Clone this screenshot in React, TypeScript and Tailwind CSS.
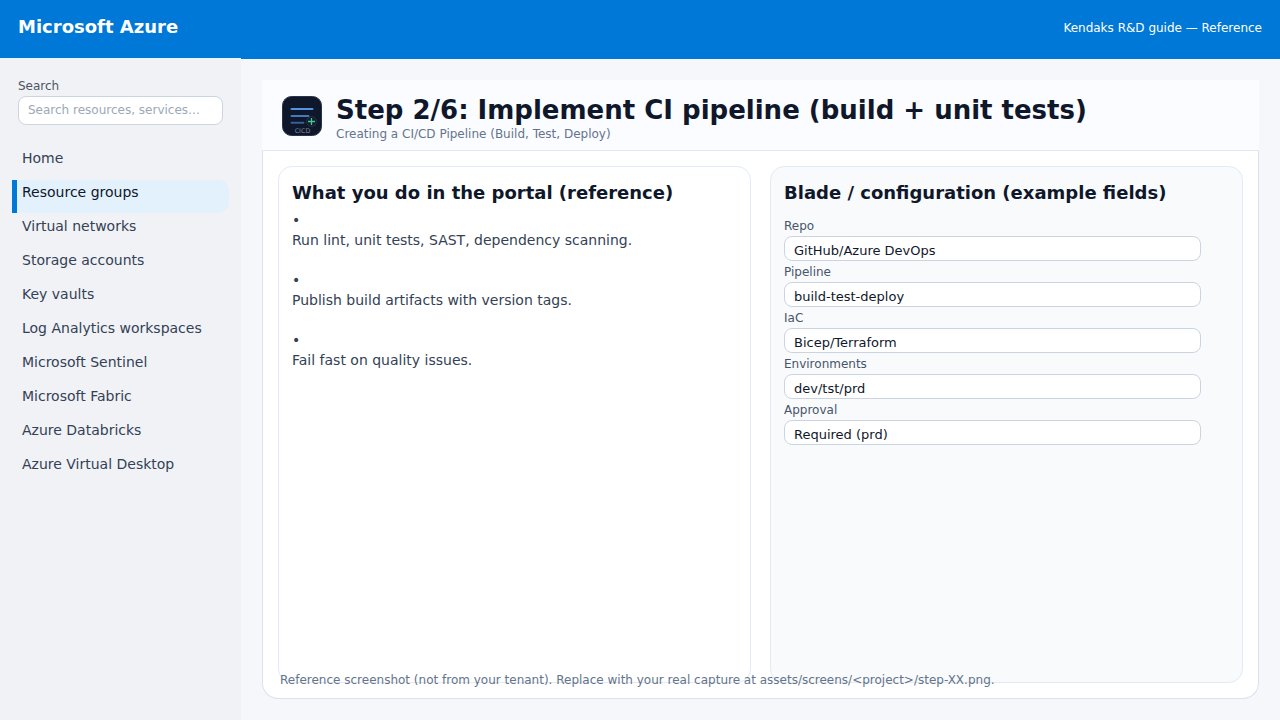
const navItems = [
  'Home',
  'Resource groups',
  'Virtual networks',
  'Storage accounts',
  'Key vaults',
  'Log Analytics workspaces',
  'Microsoft Sentinel',
  'Microsoft Fabric',
  'Azure Databricks',
  'Azure Virtual Desktop',
];

const activeItem = 'Resource groups';

const steps = [
  'Run lint, unit tests, SAST, dependency scanning.',
  'Publish build artifacts with version tags.',
  'Fail fast on quality issues.',
];

const fields = [
  { id: 'repo', label: 'Repo', value: 'GitHub/Azure DevOps' },
  { id: 'pipeline', label: 'Pipeline', value: 'build-test-deploy' },
  { id: 'iac', label: 'IaC', value: 'Bicep/Terraform' },
  { id: 'environments', label: 'Environments', value: 'dev/tst/prd' },
  { id: 'approval', label: 'Approval', value: 'Required (prd)' },
];

function PipelineIcon() {
  return (
    <svg className="size-10 shrink-0" viewBox="0 0 40 40" aria-hidden="true">
      <rect x="0.5" y="0.5" width="39" height="39" rx="9" fill="#0f172a" stroke="#273449" />
      <path d="M9.5 13H30.5" stroke="#5294e2" strokeWidth="2" strokeLinecap="round" />
      <path d="M9.5 20H26.5" stroke="#4379bd" strokeWidth="2" strokeLinecap="round" />
      <path d="M9.5 26.8H21.5" stroke="#375f98" strokeWidth="2" strokeLinecap="round" />
      <circle cx="29.5" cy="25.5" r="5" fill="#111b2c" stroke="#26334a" />
      <path d="M26 25.5H33M29.5 22V29" stroke="#41c995" strokeWidth="1.3" />
      <text x="20.5" y="36.8" textAnchor="middle" fontSize="6.4" fill="#7c8798" fontFamily="DejaVu Sans, sans-serif">
        CICD
      </text>
    </svg>
  );
}

function Sidebar() {
  return (
    <aside className="w-[241px] shrink-0 bg-[#f1f2f6] px-3 pt-5">
      <div className="px-1.5">
        <label htmlFor="search" className="block text-xs leading-4 text-[#4b5563]">
          Search
        </label>
        <input
          id="search"
          type="search"
          placeholder="Search resources, services…"
          className="mt-0.5 block h-[29px] w-full rounded-lg border border-[#cbd5e1] bg-white px-[9px] pb-0.5 text-xs text-[#0f172a] placeholder:text-[#9ca8b8]"
        />
      </div>
      <nav className="mt-[21px] flex flex-col gap-px">
        {navItems.map((item) => (
          <a
            key={item}
            href="#"
            aria-current={item === activeItem ? 'page' : undefined}
            className={
              item === activeItem
                ? 'block h-[33px] rounded-r-[10px] border-l-5 border-[#0078d7] bg-[#e3f1fc] pl-[5px] pt-0.5 text-sm text-[#0f172a]'
                : 'block h-[33px] border-l-5 border-transparent pl-[5px] pt-0.5 text-sm text-[#334155]'
            }
          >
            {item}
          </a>
        ))}
      </nav>
    </aside>
  );
}

export default function App() {
  return (
    <div className="flex min-h-screen flex-col bg-[#f5f7fb] font-['DejaVu_Sans',sans-serif]">
      <header className="flex h-[58px] items-center justify-between bg-[#0078d7] px-[18px] text-white">
        <div className="pb-1 text-lg font-bold">Microsoft Azure</div>
        <div className="pb-0.5 text-xs">Kendaks R&amp;D guide — Reference</div>
      </header>
      <div className="flex grow">
        <Sidebar />
        <main className="flex min-w-0 grow flex-col border-t border-[#0078d7] p-[21px]">
          <div className="relative flex grow flex-col">
            <div className="flex h-[71px] items-start gap-3.5 border-b border-[#dfe9f5] bg-[#fbfcff] px-5 pt-4">
              <PipelineIcon />
              <div className="-mt-0.5">
                <h1 className="text-[26px] leading-8 font-bold text-[#0f172a]">
                  Step 2/6: Implement CI pipeline (build + unit tests)
                </h1>
                <p className="text-xs leading-4 text-[#64748b]">Creating a CI/CD Pipeline (Build, Test, Deploy)</p>
              </div>
            </div>
            <div className="grid grow grid-cols-2 gap-[19px] rounded-b-2xl border border-t-0 border-[#d7e3ef] bg-white p-[15px]">
              <section className="rounded-[14px] border border-[#e2ebf5] px-[13px] pt-3">
                <h2 className="text-lg leading-7 font-bold text-[#0f172a]">What you do in the portal (reference)</h2>
                <ul className="mt-[3px] flex flex-col gap-5 text-sm leading-5 text-[#334155]">
                  {steps.map((step) => (
                    <li key={step}>
                      <span className="block">•</span>
                      {step}
                    </li>
                  ))}
                </ul>
              </section>
              <section className="rounded-[14px] border border-[#e2ebf5] bg-[#f9fafc] pt-3 pr-[41px] pl-[13px]">
                <h2 className="text-lg leading-7 font-bold whitespace-nowrap text-[#0f172a]">
                  Blade / configuration (example fields)
                </h2>
                <div className="mt-[11px] flex flex-col gap-[3px]">
                  {fields.map((field) => (
                    <div key={field.id}>
                      <label htmlFor={field.id} className="block text-xs leading-4 text-[#475569]">
                        {field.label}
                      </label>
                      <input
                        id={field.id}
                        type="text"
                        defaultValue={field.value}
                        className="mt-0.5 block h-[25px] w-full rounded-lg border border-[#cbd5e1] bg-white px-[9px] pt-1 text-[13px] text-[#0f172a]"
                      />
                    </div>
                  ))}
                </div>
              </section>
            </div>
            <p className="absolute bottom-[11px] left-[18px] text-xs leading-4 text-[#64748b]">
              Reference screenshot (not from your tenant). Replace with your real capture at
              assets/screens/&lt;project&gt;/step-XX.png.
            </p>
          </div>
        </main>
      </div>
    </div>
  );
}
